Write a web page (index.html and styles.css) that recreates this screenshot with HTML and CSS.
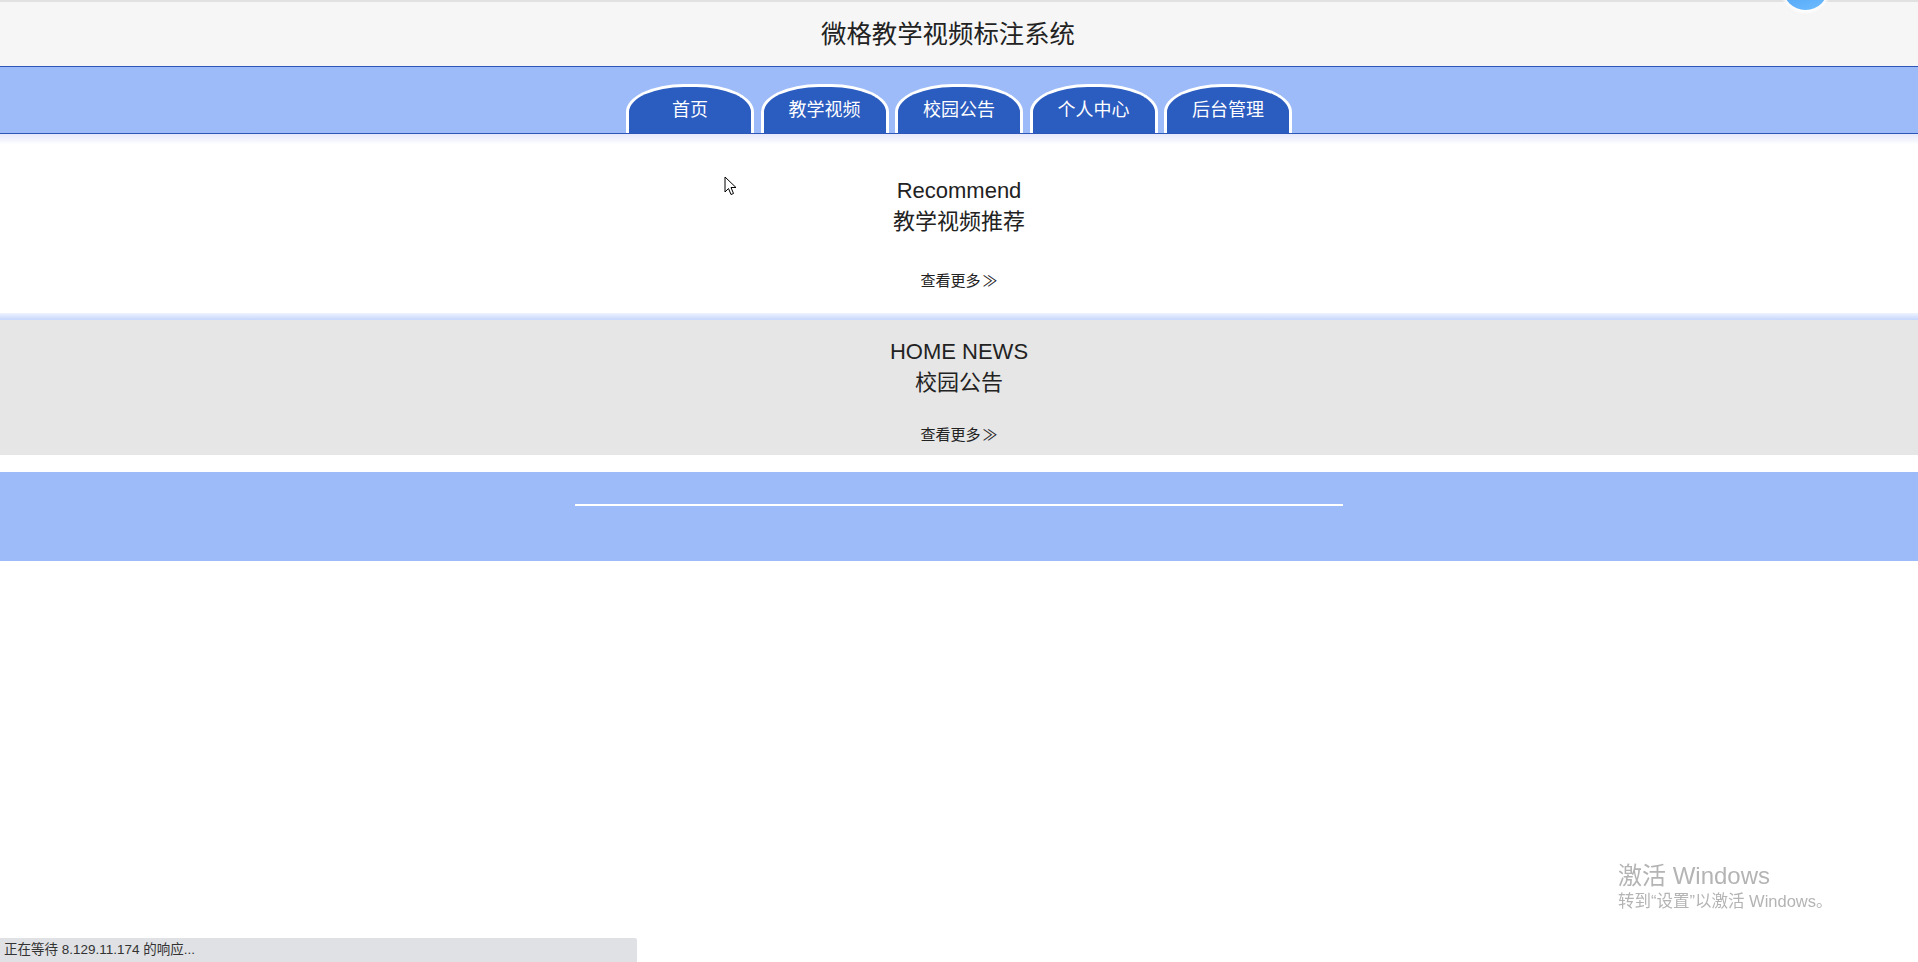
FILE: index.html
```html
<!DOCTYPE html>
<html lang="zh-CN">
<head>
<meta charset="utf-8">
<title>微格教学视频标注系统</title>
<link rel="stylesheet" href="styles.css">
</head>
<body>
<header class="site-header">
  <h1 class="site-title">微格教学视频标注系统</h1>
</header>
<nav class="main-nav">
  <a class="nav-tab" href="#">首页</a>
  <a class="nav-tab" href="#">教学视频</a>
  <a class="nav-tab" href="#">校园公告</a>
  <a class="nav-tab" href="#">个人中心</a>
  <a class="nav-tab" href="#">后台管理</a>
</nav>
<div class="nav-shadow"></div>
<section class="block block-recommend">
  <div class="block-en">Recommend</div>
  <div class="block-cn">教学视频推荐</div>
  <a class="more-link" href="#">查看更多<span class="more-arrow">≫</span></a>
</section>
<div class="block-divider"></div>
<section class="block block-news">
  <div class="block-en">HOME NEWS</div>
  <div class="block-cn">校园公告</div>
  <a class="more-link" href="#">查看更多<span class="more-arrow">≫</span></a>
</section>
<footer class="site-footer">
  <div class="footer-line"></div>
</footer>

<div class="float-ball"></div>
<svg class="cursor" width="13" height="20" viewBox="0 0 13 20"><path d="M1 1 L1 16 L4.5 12.5 L7 18.5 L9.5 17.5 L7 11.5 L12 11.5 Z" fill="#fff" stroke="#000" stroke-width="1"/></svg>
<div class="status-bar">正在等待 8.129.11.174 的响应...</div>
<div class="watermark">
  <div class="wm-title">激活 Windows</div>
  <div class="wm-sub">转到“设置”以激活 Windows。</div>
</div>
</body>
</html>
```
FILE: styles.css
```css
* { box-sizing: border-box; }
html, body {
  margin: 0;
  padding: 0;
  background: #ffffff;
  font-family: "Liberation Sans", "Noto Sans CJK SC", Arial, sans-serif;
  color: #333333;
}
a { text-decoration: none; }

.site-header {
  height: 67px;
  background: #f6f6f6;
  border-top: 2px solid #e1e1e1;
  border-bottom: 1px solid #2d56b9;
}
.site-title {
  margin: 0;
  height: 64px;
  line-height: 64px;
  padding-right: 22px;
  text-align: center;
  font-size: 25.4px;
  font-weight: normal;
  color: #222222;
}

.main-nav {
  height: 67px;
  background: #9dbaf9;
  border-bottom: 1px solid #2d56b9;
  display: flex;
  justify-content: center;
  align-items: flex-end;
  gap: 6.5px;
}
.nav-tab {
  width: 128px;
  height: 49px;
  background: #2b5cbf;
  border: 3px solid #ffffff;
  border-bottom: none;
  border-radius: 58px 58px 0 0 / 28px 28px 0 0;
  color: #ffffff;
  font-size: 18px;
  line-height: 22px;
  padding-top: 12px;
  text-align: center;
}

.nav-shadow {
  height: 10px;
  background: linear-gradient(#e6e8fb, #f5f6fe 70%, #ffffff);
}

.block {
  text-align: center;
}
.block-recommend {
  height: 169px;
  padding-top: 31px;
  background: #ffffff;
}
.block-news {
  height: 135px;
  padding-top: 16px;
  background: #e6e6e6;
}
.block-en, .block-cn {
  font-size: 22px;
  line-height: 31px;
  color: #222222;
}
.more-link {
  display: inline-block;
  margin-top: 33px;
  font-size: 15px;
  line-height: 20px;
  color: #222222;
}
.block-news .more-link { margin-top: 26px; }
.more-arrow {
  margin-left: 2px;
  font-family: "Noto Sans CJK SC", sans-serif;
}

.block-divider {
  height: 7px;
  background: linear-gradient(#eef3fe, #c6d6fb);
}

.site-footer {
  margin-top: 17px;
  height: 89px;
  background: #9dbaf9;
  padding-top: 32px;
}
.footer-line {
  width: 768px;
  height: 2px;
  margin: 0 auto;
  background: #ffffff;
}

.float-ball {
  position: absolute;
  left: 1783px;
  top: -35px;
  width: 45px;
  height: 45px;
  border-radius: 50%;
  background: linear-gradient(160deg, #3f95ee, #6cbcff);
  box-shadow: 0 2px 3px 2px rgba(255, 255, 255, 0.9), 0 3px 4px rgba(0, 0, 0, 0.08);
}

.cursor {
  position: absolute;
  left: 724px;
  top: 176px;
}

.status-bar {
  position: fixed;
  left: 0;
  bottom: 0;
  width: 637px;
  height: 24px;
  padding-left: 4px;
  line-height: 24px;
  font-size: 13.5px;
  background: #dfe1e5;
  color: #333333;
  border-top-right-radius: 2px;
}

.watermark {
  position: fixed;
  left: 1618px;
  top: 861px;
  color: #b4b4b4;
}
.wm-title {
  font-size: 24px;
  line-height: 30px;
}
.wm-sub {
  font-size: 16.5px;
  line-height: 21px;
}
```
